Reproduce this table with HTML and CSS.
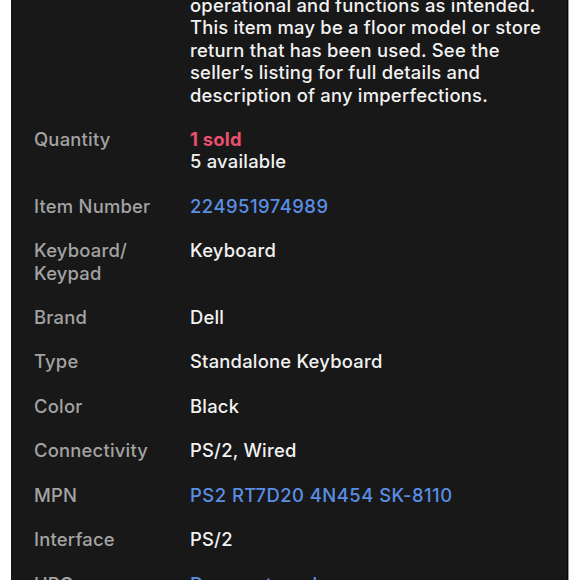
FILE: index.html
```html
<!DOCTYPE html>
<html>
<head>
<meta charset="utf-8">
<link rel="stylesheet" href="styles.css">
</head>
<body>
<div class="page">
  <div class="panel">
    <dl class="specs">
      <dt class="label"></dt>
      <dd class="value desc">operational and functions as intended. This item may be a floor model or store return that has been used. See the seller’s listing for full details and description of any imperfections.</dd>

      <dt class="label">Quantity</dt>
      <dd class="value"><span class="sold">1 sold</span><br>5 available</dd>

      <dt class="label">Item Number</dt>
      <dd class="value link">224951974989</dd>

      <dt class="label">Keyboard/<br>Keypad</dt>
      <dd class="value">Keyboard</dd>

      <dt class="label">Brand</dt>
      <dd class="value">Dell</dd>

      <dt class="label">Type</dt>
      <dd class="value">Standalone Keyboard</dd>

      <dt class="label">Color</dt>
      <dd class="value">Black</dd>

      <dt class="label">Connectivity</dt>
      <dd class="value">PS/2, Wired</dd>

      <dt class="label">MPN</dt>
      <dd class="value link">PS2 RT7D20 4N454 SK-8110</dd>

      <dt class="label">Interface</dt>
      <dd class="value">PS/2</dd>

      <dt class="label">UPC</dt>
      <dd class="value link">Does not apply</dd>
    </dl>
  </div>
</div>
</body>
</html>
```

FILE: styles.css
```css
html, body {
  margin: 0;
  padding: 0;
  background: #ffffff;
  overflow: hidden;
}
.page {
  width: 580px;
  height: 580px;
  overflow: hidden;
  padding-left: 11px;
  box-sizing: border-box;
}
.panel {
  width: 557px;
  height: 640px;
  background: #181818;
  border-right: 1px solid #050505;
  box-shadow: 1px 0 0 #9a9a9a;
  box-sizing: border-box;
  padding: 0 12px 0 23px;
}
.specs {
  margin: 0;
  margin-top: -6px;
  display: grid;
  grid-template-columns: 156px 1fr;
  row-gap: 22px;
  font-family: Inter, "Noto Sans", sans-serif;
  font-size: 18.4px;
  font-weight: 500;
  line-height: 22.4px;
  letter-spacing: 0.22px;
}
.label {
  margin: 0;
  color: #a3a3a3;
}
.value {
  margin: 0;
  color: #f2f2f2;
}
.link {
  color: #5a8ee4;
  letter-spacing: 0.5px;
}
.sold {
  color: #e8506c;
  font-weight: 700;
}
```
